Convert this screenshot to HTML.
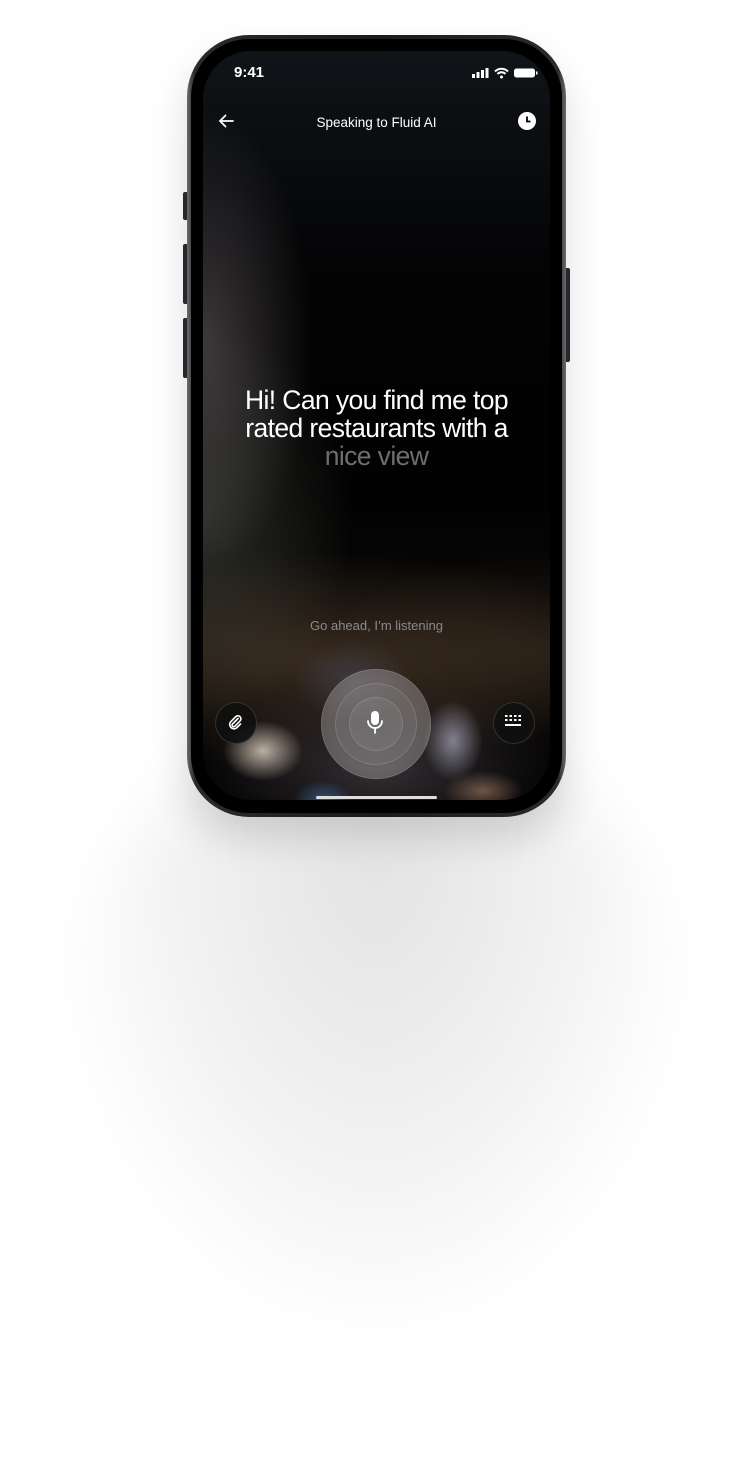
<!DOCTYPE html>
<html><head><style>
html,body{margin:0;padding:0;background:#fff;width:752px;height:1458px;overflow:hidden;position:relative;font-family:"Liberation Sans",Arial,sans-serif}
.sh{position:absolute;left:70px;top:720px;width:612px;height:600px;border-radius:50%;background:radial-gradient(ellipse at 50% 25%,rgba(0,0,0,.11),rgba(0,0,0,.05) 45%,rgba(0,0,0,0) 75%);filter:blur(30px)}
.btn{position:absolute;background:#2a2a2e;border-radius:2px}
.phone{position:absolute;left:187px;top:35px;width:379px;height:782px;border-radius:62px;background:linear-gradient(90deg,#6a6a6e,#2b2b2f 2%,#1a1a1c 50%,#2b2b2f 98%,#6a6a6e);box-shadow:0 20px 40px rgba(0,0,0,.14)}
.bezel{position:absolute;left:4px;top:4px;right:4px;bottom:4px;border-radius:58px;background:#000}
.screen{position:absolute;left:16px;top:16px;width:347px;height:749px;border-radius:48px;overflow:hidden;background:#030305}
.glow{position:absolute;inset:0;background:
radial-gradient(ellipse 110px 230px at 0px 290px,rgba(130,120,125,.45),rgba(0,0,0,0)),
radial-gradient(ellipse 150px 200px at 0px 470px,rgba(100,105,90,.4),rgba(0,0,0,0)),
radial-gradient(ellipse 300px 110px at 120px 610px,rgba(110,85,60,.45),rgba(0,0,0,0)),
radial-gradient(ellipse 200px 100px at 330px 600px,rgba(70,55,40,.4),rgba(0,0,0,0)),
linear-gradient(180deg,#101418 0%,#030304 30%,#020202 60%,#0c0907 80%,#000 100%)}
.blob{position:absolute;left:0;top:590px;width:347px;height:160px;background:
radial-gradient(ellipse 40px 30px at 60px 110px,rgba(255,240,220,.7),rgba(0,0,0,0)),
radial-gradient(ellipse 30px 40px at 250px 100px,rgba(230,230,255,.5),rgba(0,0,0,0)),
radial-gradient(ellipse 40px 20px at 280px 150px,rgba(200,150,120,.5),rgba(0,0,0,0)),
radial-gradient(ellipse 30px 20px at 120px 160px,rgba(80,150,230,.45),rgba(0,0,0,0)),
radial-gradient(ellipse 60px 40px at 150px 40px,rgba(70,70,90,.6),rgba(0,0,0,0)),
radial-gradient(ellipse 190px 90px at 175px 130px,rgba(55,50,55,.9),rgba(0,0,0,0))}
.t{position:absolute;color:#fff;white-space:nowrap}
.circ{position:absolute;border-radius:50%}
</style></head><body>
<div class="sh"></div>
<div class="btn" style="left:183px;top:192px;width:5px;height:28px"></div>
<div class="btn" style="left:183px;top:244px;width:5px;height:60px"></div>
<div class="btn" style="left:183px;top:318px;width:5px;height:60px"></div>
<div class="btn" style="left:565px;top:268px;width:5px;height:94px"></div>
<div class="phone"><div class="bezel"></div>
<div class="screen">
<div class="glow"></div>
<div class="blob"></div>
<div class="t" style="left:31px;top:13px;font-size:15px;font-weight:bold">9:41</div>
<svg style="position:absolute;left:269px;top:16px" width="66" height="12" viewBox="0 0 66 12">
<rect x="0" y="7" width="3" height="4" fill="#fff"/><rect x="4.5" y="5" width="3" height="6" fill="#fff"/><rect x="9" y="3" width="3" height="8" fill="#fff"/><rect x="13.5" y="1" width="3" height="10" fill="#fff"/>
<path d="M23 4.5a9 9 0 0 1 13 0M25.5 7a5.5 5.5 0 0 1 8 0" stroke="#fff" stroke-width="2" fill="none"/><circle cx="29.5" cy="10" r="1.5" fill="#fff"/>
<rect x="42" y="1.5" width="21" height="9" rx="2.5" fill="#fff"/><rect x="64" y="4.5" width="1.5" height="3" fill="#fff"/></svg>
<svg style="position:absolute;left:15px;top:63px" width="16" height="14" viewBox="0 0 16 14"><path d="M15 7H2M7.5 1.5L2 7l5.5 5.5" stroke="#fff" stroke-width="1.8" fill="none" stroke-linecap="round"/></svg>
<div class="t" style="left:0;width:347px;text-align:center;top:64px;font-size:13.5px">Speaking to Fluid AI</div>
<svg style="position:absolute;left:315px;top:61px" width="18" height="18" viewBox="0 0 18 18"><circle cx="9" cy="9" r="9" fill="#fff"/><path d="M9 4.5V9.5H12.5" stroke="#000" stroke-width="1.8" fill="none"/></svg>
<div class="t" style="left:0;width:347px;text-align:center;top:335px;font-size:26.5px;line-height:28px;letter-spacing:-.6px">Hi! Can you find me top<br>rated restaurants with a<br><span style="color:#6e6e6e">nice view</span></div>
<div class="t" style="left:0;width:347px;text-align:center;top:567px;font-size:13px;color:#8a8a8a">Go ahead, I’m listening</div>
<div class="circ" style="left:12px;top:651px;width:40px;height:40px;background:rgba(15,15,15,.9);border:1px solid rgba(255,255,255,.15)"></div>
<svg style="position:absolute;left:24px;top:663px" width="17" height="17" viewBox="0 0 17 17"><path d="M11 4.5L5.5 10a1.6 1.6 0 0 0 2.3 2.3L13 7a3 3 0 0 0-4.3-4.3L3.5 8a4.3 4.3 0 0 0 6 6l4-4" stroke="#fff" stroke-width="1.6" fill="none" stroke-linecap="round"/></svg>
<div class="circ" style="left:290px;top:651px;width:40px;height:40px;background:rgba(15,15,15,.9);border:1px solid rgba(255,255,255,.15)"></div>
<svg style="position:absolute;left:302px;top:664px" width="16" height="12" viewBox="0 0 16 12"><g fill="#fff"><rect x="0" y="0" width="2.5" height="2"/><rect x="4.5" y="0" width="2.5" height="2"/><rect x="9" y="0" width="2.5" height="2"/><rect x="13.5" y="0" width="2.5" height="2"/><rect x="0" y="4" width="2.5" height="2"/><rect x="4.5" y="4" width="2.5" height="2"/><rect x="9" y="4" width="2.5" height="2"/><rect x="13.5" y="4" width="2.5" height="2"/><rect x="0" y="9" width="16" height="2"/></g></svg>
<div class="circ" style="left:118px;top:618px;width:108px;height:108px;background:radial-gradient(circle,rgba(200,200,205,.35),rgba(170,165,165,.45) 60%,rgba(130,120,120,.5));border:1px solid rgba(255,255,255,.12)"></div>
<div class="circ" style="left:132px;top:632px;width:80px;height:80px;border:1px solid rgba(255,255,255,.12);background:rgba(255,255,255,.05)"></div>
<div class="circ" style="left:146px;top:646px;width:52px;height:52px;border:1px solid rgba(255,255,255,.12);background:rgba(255,255,255,.06)"></div>
<svg style="position:absolute;left:163px;top:660px" width="18" height="24" viewBox="0 0 18 24"><rect x="5" y="0" width="8" height="14" rx="4" fill="#fff"/><path d="M2 10a7 7 0 0 0 14 0M9 17v5" stroke="#fff" stroke-width="1.8" fill="none" stroke-linecap="round"/></svg>
<div style="position:absolute;left:113px;top:745px;width:121px;height:3px;border-radius:2px;background:#ddd"></div>
</div></div>
</body></html>
